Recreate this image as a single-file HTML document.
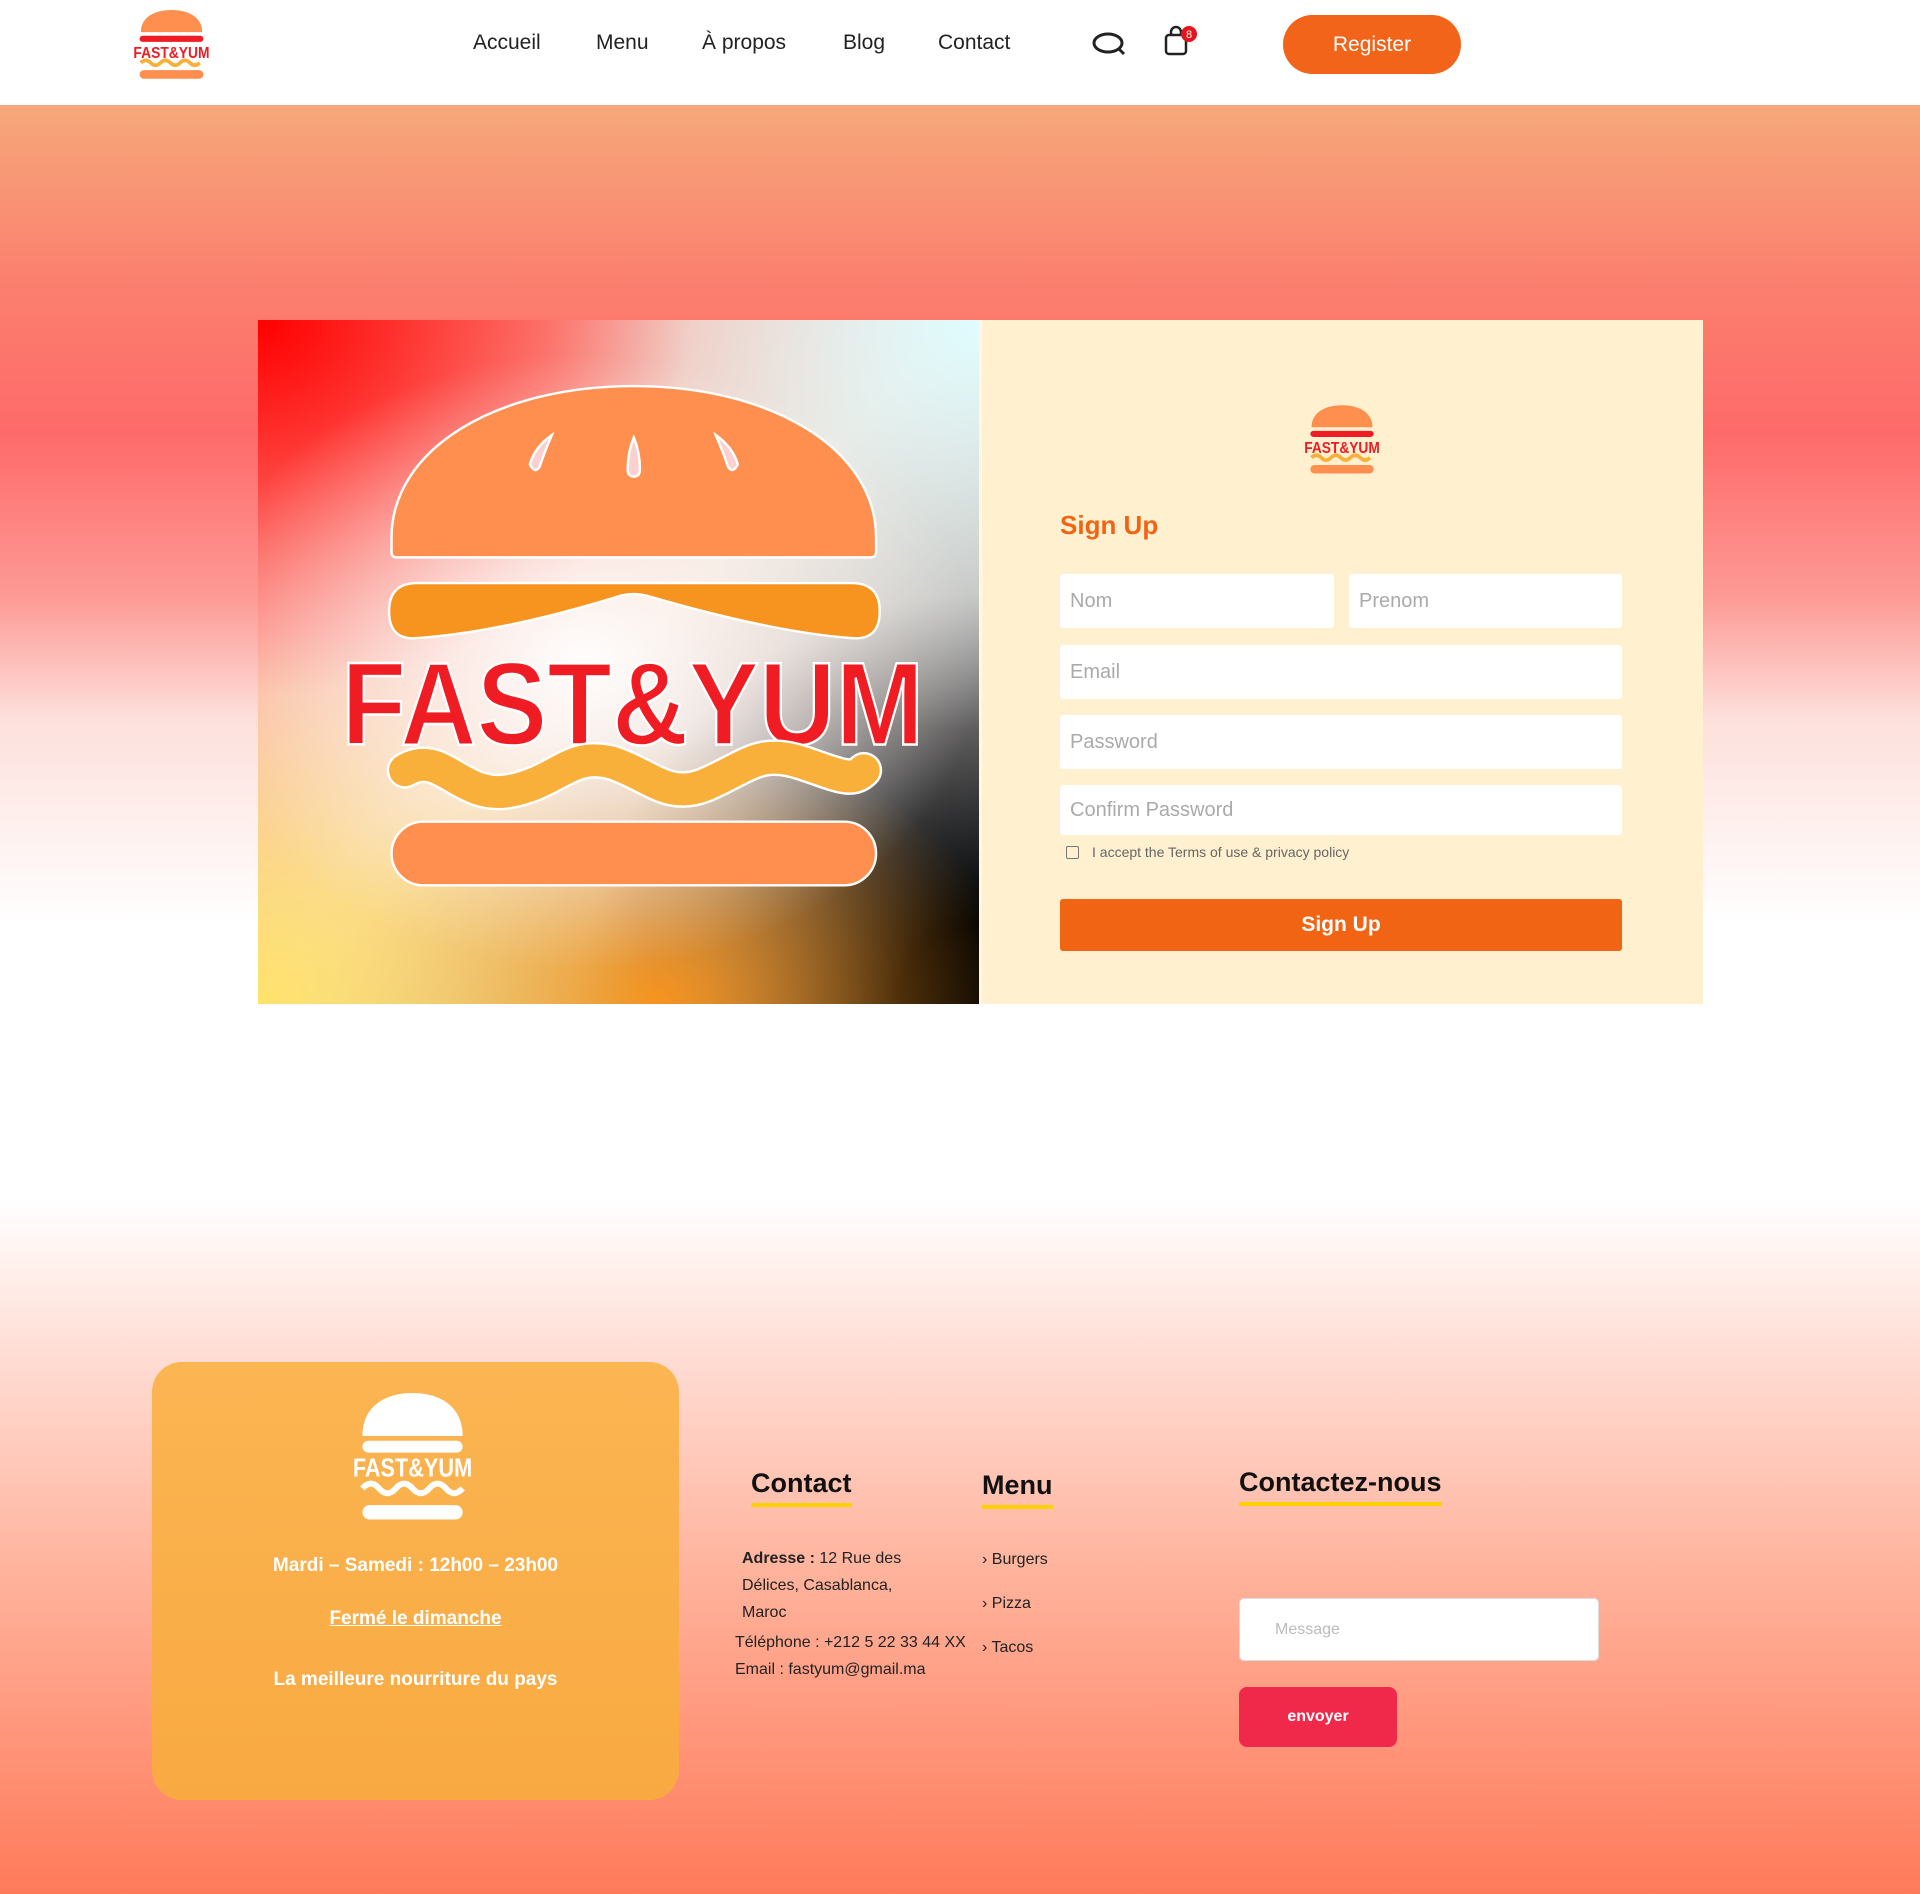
<!DOCTYPE html>
<html><head><meta charset="utf-8">
<style>
*{margin:0;padding:0;box-sizing:border-box}
body{width:1920px;height:1894px;position:relative;overflow:hidden;font-family:"Liberation Sans",sans-serif;background:#fff}
.abs{position:absolute}
header{position:absolute;left:0;top:0;width:1920px;height:105px;background:#fff}
nav a{position:absolute;top:31px;font-size:21px;color:#222;text-decoration:none}
.hero{position:absolute;left:0;top:105px;width:1920px;height:820px;background:linear-gradient(#f6a87a 0%,#fb7f6e 22%,#fe6a6a 40%,#fd9a95 60%,#fde0dc 75%,#fff 100%)}
.foot{position:absolute;left:0;top:1200px;width:1920px;height:694px;background:linear-gradient(#fff 0%,#ffd9cf 25%,#ffb19a 55%,#ff7a5a 100%)}
.panel{position:absolute;left:258px;top:320px;width:721px;height:684px;overflow:hidden;
background:
radial-gradient(ellipse 55% 45% at 45% 50%,rgba(255,255,255,.95),rgba(255,255,255,0) 100%),
radial-gradient(ellipse 60% 55% at 0% 0%,#ff0000,rgba(255,0,0,0) 100%),
radial-gradient(ellipse 60% 60% at 100% 0%,#dffcff,rgba(223,252,255,0) 100%),
radial-gradient(ellipse 55% 55% at 0% 100%,#ffe26a,rgba(255,226,106,0) 100%),
radial-gradient(ellipse 50% 40% at 55% 100%,#f7941e,rgba(247,148,30,0) 100%),
radial-gradient(ellipse 55% 60% at 100% 100%,#000 20%,rgba(0,0,0,0) 100%),
linear-gradient(135deg,#ff8a80,#f4d6c8 50%,#6b7b86)}
.form{position:absolute;left:982px;top:320px;width:721px;height:684px;background:#fff1d0}
.inp{position:absolute;background:#fff;border-radius:3px;color:#aaa;font-size:20px;padding-left:10px;display:flex;align-items:center}
.fh{position:absolute;font-size:27px;font-weight:bold;color:#111}
.fh:after{content:"";position:absolute;left:0;right:0;bottom:-8px;height:4px;background:#ffd000}
.ft{position:absolute;font-size:16px;color:#222}
</style></head><body>
<header>
<svg class="abs" style="left:132px;top:10px" width="79" height="70" viewBox="0 0 64 57">
<path d="M7,18 C7,6 18,0 32,0 C46,0 57,6 57,18 Z" fill="#fe8f4f"/>
<rect x="6" y="21" width="52" height="5" rx="2.5" fill="#f01c24"/>
<text x="32" y="39" text-anchor="middle" font-family="Liberation Sans" font-weight="bold" font-size="13" fill="#f01c24" textLength="62" lengthAdjust="spacingAndGlyphs">FAST&amp;YUM</text>
<path d="M7,43 q4,-4 8,0 t8,0 t8,0 t8,0 t8,0 t8,0" stroke="#f9b03a" stroke-width="3" fill="none"/>
<rect x="6" y="49" width="52" height="7" rx="3.5" fill="#fe8f4f"/>
</svg>
<nav><a style="left:473px">Accueil</a><a style="left:596px">Menu</a><a style="left:702px">À propos</a><a style="left:843px">Blog</a><a style="left:938px">Contact</a></nav>
<svg class="abs" style="left:1092px;top:32px" width="34" height="24" viewBox="0 0 34 24"><ellipse cx="16" cy="11" rx="14" ry="9" stroke="#222" stroke-width="3" fill="none"/><path d="M27,17 L32,22" stroke="#222" stroke-width="3"/></svg>
<svg class="abs" style="left:1164px;top:24px" width="38" height="34" viewBox="0 0 38 34"><rect x="2" y="11" width="20" height="19" rx="3" stroke="#222" stroke-width="2.5" fill="none"/><path d="M7,11 V8 a5,5 0 0 1 10,0 V11" stroke="#222" stroke-width="2.5" fill="none"/><circle cx="25" cy="10" r="8" fill="#e8141c"/><text x="25" y="14" text-anchor="middle" font-size="11" fill="#fff" font-family="Liberation Sans">8</text></svg>
<div class="abs" style="left:1283px;top:15px;width:178px;height:59px;border-radius:30px;background:#f26419;color:#fff;font-size:21px;display:flex;align-items:center;justify-content:center">Register</div>
</header>
<div class="hero"></div>
<div class="foot"></div>
<div class="abs" style="left:978px;top:320px;width:6px;height:684px;background:#fff5e8"></div>

<div class="panel">
<svg width="721" height="684" viewBox="0 0 589 559">
<path d="M109,190 L109,178 C109,105 195,54 307,54 C419,54 505,105 505,178 L505,190 Q505,194 500,194 L114,194 Q109,194 109,190 Z" fill="#fe8f4f" stroke="#fff" stroke-width="2"/>
<path d="M222,118 q4,-14 18,-24 q-6,14 -10,26 q-4,6 -8,-2z" fill="#fbd0d0" stroke="#fff" stroke-width="2"/>
<path d="M307,96 q5,12 5,26 q0,6 -5,6 q-5,0 -5,-6 q0,-14 5,-26z" fill="#fbd0d0" stroke="#fff" stroke-width="2"/>
<path d="M374,94 q14,10 18,24 q-4,8 -8,2 q-4,-12 -10,-26z" fill="#fbd0d0" stroke="#fff" stroke-width="2"/>
<path d="M130,215 L485,215 Q508,215 508,238 Q508,262 485,260 Q420,255 320,226 Q307,222 294,226 Q200,255 130,260 Q107,262 107,238 Q107,215 130,215Z" fill="#f7941f" stroke="#fff" stroke-width="2"/>
<text x="306" y="347" text-anchor="middle" font-family="Liberation Sans" font-weight="bold" font-size="96" fill="#f01c24" stroke="#fff" stroke-width="2" textLength="476" lengthAdjust="spacingAndGlyphs">FAST&amp;YUM</text>
<path d="M120,368 C150,350 165,392 205,385 C245,378 255,352 290,362 C320,372 335,392 365,380 C400,365 410,350 445,362 C475,372 485,378 495,368" stroke="#fff" stroke-width="30" fill="none" stroke-linecap="round"/>
<path d="M120,368 C150,350 165,392 205,385 C245,378 255,352 290,362 C320,372 335,392 365,380 C400,365 410,350 445,362 C475,372 485,378 495,368" stroke="#f9b03a" stroke-width="26" fill="none" stroke-linecap="round"/>
<rect x="109" y="410" width="396" height="52" rx="26" fill="#fe8f4f" stroke="#fff" stroke-width="2"/>
</svg>
</div>

<div class="form">
<svg class="abs" style="left:321px;top:84px" width="78" height="72" viewBox="0 0 64 57">
<path d="M7,18 C7,6 18,0 32,0 C46,0 57,6 57,18 Z" fill="#fe8f4f"/>
<rect x="6" y="21" width="52" height="5" rx="2.5" fill="#f01c24"/>
<text x="32" y="39" text-anchor="middle" font-family="Liberation Sans" font-weight="bold" font-size="13" fill="#f01c24" textLength="62" lengthAdjust="spacingAndGlyphs">FAST&amp;YUM</text>
<path d="M7,43 q4,-4 8,0 t8,0 t8,0 t8,0 t8,0 t8,0" stroke="#f9b03a" stroke-width="3" fill="none"/>
<rect x="6" y="49" width="52" height="7" rx="3.5" fill="#fe8f4f"/>
</svg>
<div class="abs" style="left:78px;top:190px;font-size:26px;font-weight:bold;color:#f06414">Sign Up</div>
<div class="inp" style="left:78px;top:254px;width:274px;height:54px">Nom</div>
<div class="inp" style="left:367px;top:254px;width:273px;height:54px">Prenom</div>
<div class="inp" style="left:78px;top:325px;width:562px;height:54px">Email</div>
<div class="inp" style="left:78px;top:395px;width:562px;height:54px">Password</div>
<div class="inp" style="left:78px;top:465px;width:562px;height:50px">Confirm Password</div>
<div class="abs" style="left:84px;top:526px;width:13px;height:13px;border:1.5px solid #777;border-radius:2px"></div>
<div class="abs" style="left:110px;top:524px;font-size:14px;color:#666">I accept the Terms of use &amp; privacy policy</div>
<div class="abs" style="left:78px;top:579px;width:562px;height:52px;background:#f06414;border-radius:3px;color:#fff;font-size:21px;font-weight:bold;display:flex;align-items:center;justify-content:center">Sign Up</div>
</div>

<div class="abs" style="left:152px;top:1362px;width:527px;height:438px;border-radius:30px;background:linear-gradient(#fbb552,#f9a941)"></div>
<svg class="abs" style="left:335px;top:1393px" width="155" height="136" viewBox="0 0 64 57">
<path d="M11,18 C11,6 20,0 32,0 C44,0 53,6 53,18 Z" fill="#fff"/>
<rect x="11" y="20" width="42" height="5" rx="2.5" fill="#fff"/>
<text x="32" y="35" text-anchor="middle" font-family="Liberation Sans" font-weight="bold" font-size="11" fill="#fff" textLength="50" lengthAdjust="spacingAndGlyphs">FAST&amp;YUM</text>
<path d="M11,40 q3.5,-4 7,0 t7,0 t7,0 t7,0 t7,0 t7,0" stroke="#fff" stroke-width="2.5" fill="none"/>
<rect x="11" y="47" width="42" height="6" rx="3" fill="#fff"/>
</svg>
<div class="abs" style="left:152px;top:1555px;width:527px;text-align:center;color:#fff;font-weight:bold;font-size:19px">Mardi – Samedi : 12h00 – 23h00</div>
<div class="abs" style="left:152px;top:1608px;width:527px;text-align:center;color:#fff;font-weight:bold;font-size:19px;text-decoration:underline">Fermé le dimanche</div>
<div class="abs" style="left:152px;top:1669px;width:527px;text-align:center;color:#fff;font-weight:bold;font-size:19px">La meilleure nourriture du pays</div>

<div class="fh" style="left:751px;top:1468px">Contact</div>
<div class="fh" style="left:982px;top:1470px">Menu</div>
<div class="fh" style="left:1239px;top:1467px">Contactez-nous</div>
<div class="ft" style="left:742px;top:1545px;line-height:27px;width:190px"><b>Adresse :</b> 12 Rue des Délices, Casablanca, Maroc</div>
<div class="ft" style="left:735px;top:1634px">Téléphone : +212 5 22 33 44 XX</div>
<div class="ft" style="left:735px;top:1661px">Email : fastyum@gmail.ma</div>
<div class="ft" style="left:982px;top:1551px">› Burgers</div>
<div class="ft" style="left:982px;top:1595px">› Pizza</div>
<div class="ft" style="left:982px;top:1639px">› Tacos</div>
<div class="abs" style="left:1239px;top:1598px;width:360px;height:63px;background:#fff;border:1px solid #ddd;border-radius:5px;color:#bbb;font-size:16px;padding:22px 0 0 35px">Message</div>
<div class="abs" style="left:1239px;top:1687px;width:158px;height:60px;background:#f0294a;border-radius:8px;color:#fff;font-weight:bold;font-size:16px;display:flex;align-items:center;justify-content:center">envoyer</div>
</body></html>
